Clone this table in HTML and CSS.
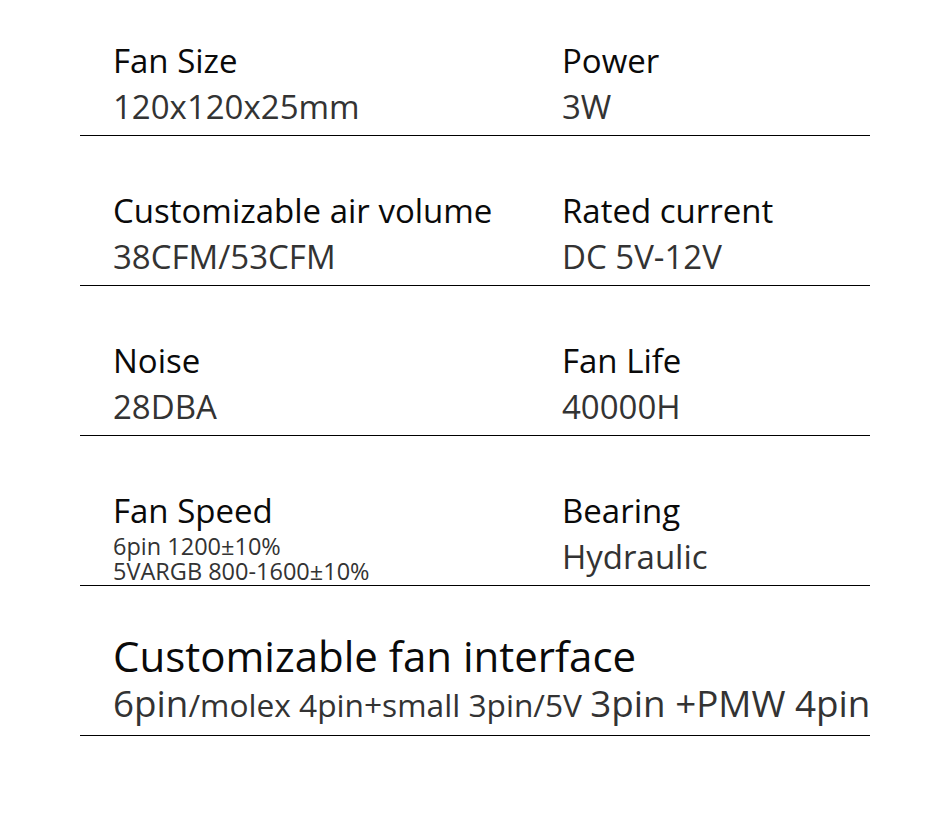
FILE: index.html
```html
<!DOCTYPE html>
<html>
<head>
<meta charset="utf-8">
<link rel="stylesheet" href="styles.css">
</head>
<body>
<div class="sheet">
  <div class="row">
    <div class="cell"><div class="label">Fan Size</div><div class="value">120x120x25mm</div></div>
    <div class="cell"><div class="label">Power</div><div class="value">3W</div></div>
  </div>
  <div class="row">
    <div class="cell"><div class="label">Customizable air volume</div><div class="value">38CFM/53CFM</div></div>
    <div class="cell"><div class="label">Rated current</div><div class="value">DC 5V-12V</div></div>
  </div>
  <div class="row">
    <div class="cell"><div class="label">Noise</div><div class="value">28DBA</div></div>
    <div class="cell"><div class="label">Fan Life</div><div class="value">40000H</div></div>
  </div>
  <div class="row">
    <div class="cell"><div class="label">Fan Speed</div><div class="small">6pin 1200±10%</div><div class="small">5VARGB 800-1600±10%</div></div>
    <div class="cell"><div class="label">Bearing</div><div class="value">Hydraulic</div></div>
  </div>
  <div class="row wide">
    <div class="cell">
      <div class="big">Customizable fan interface</div>
      <div class="iface"><span class="lg">6pin</span>/molex 4pin+small 3pin/5V <span class="lg">3pin +PMW 4pin</span></div>
    </div>
  </div>
</div>
</body>
</html>
```
FILE: styles.css
```css
html, body { margin: 0; padding: 0; background: #fff; }
body { font-family: "Open Sans", "Noto Sans", sans-serif; color: #000; }
.sheet { width: 790px; margin-left: 80px; }
.row {
  display: grid;
  grid-template-columns: 449px 1fr;
  align-content: start;
  height: 150px;
  padding-top: 52px;
  padding-left: 33px;
  border-bottom: 1px solid #000;
  box-sizing: border-box;
}
.row:first-child { height: 136px; padding-top: 38px; }
.row.wide { grid-template-columns: 1fr; padding-top: 41px; }
.label { font-size: 33px; line-height: 46px; color: #0a0a0a; }
.value { font-size: 33px; line-height: 46px; color: #333; }
.small { font-size: 23.5px; line-height: 25px; color: #333; white-space: nowrap; }
.big { font-size: 42px; line-height: 57px; color: #0a0a0a; white-space: nowrap; }
.iface { font-size: 31.7px; line-height: 38px; color: #333; white-space: nowrap; }
.iface .lg { font-size: 36.8px; }
```
